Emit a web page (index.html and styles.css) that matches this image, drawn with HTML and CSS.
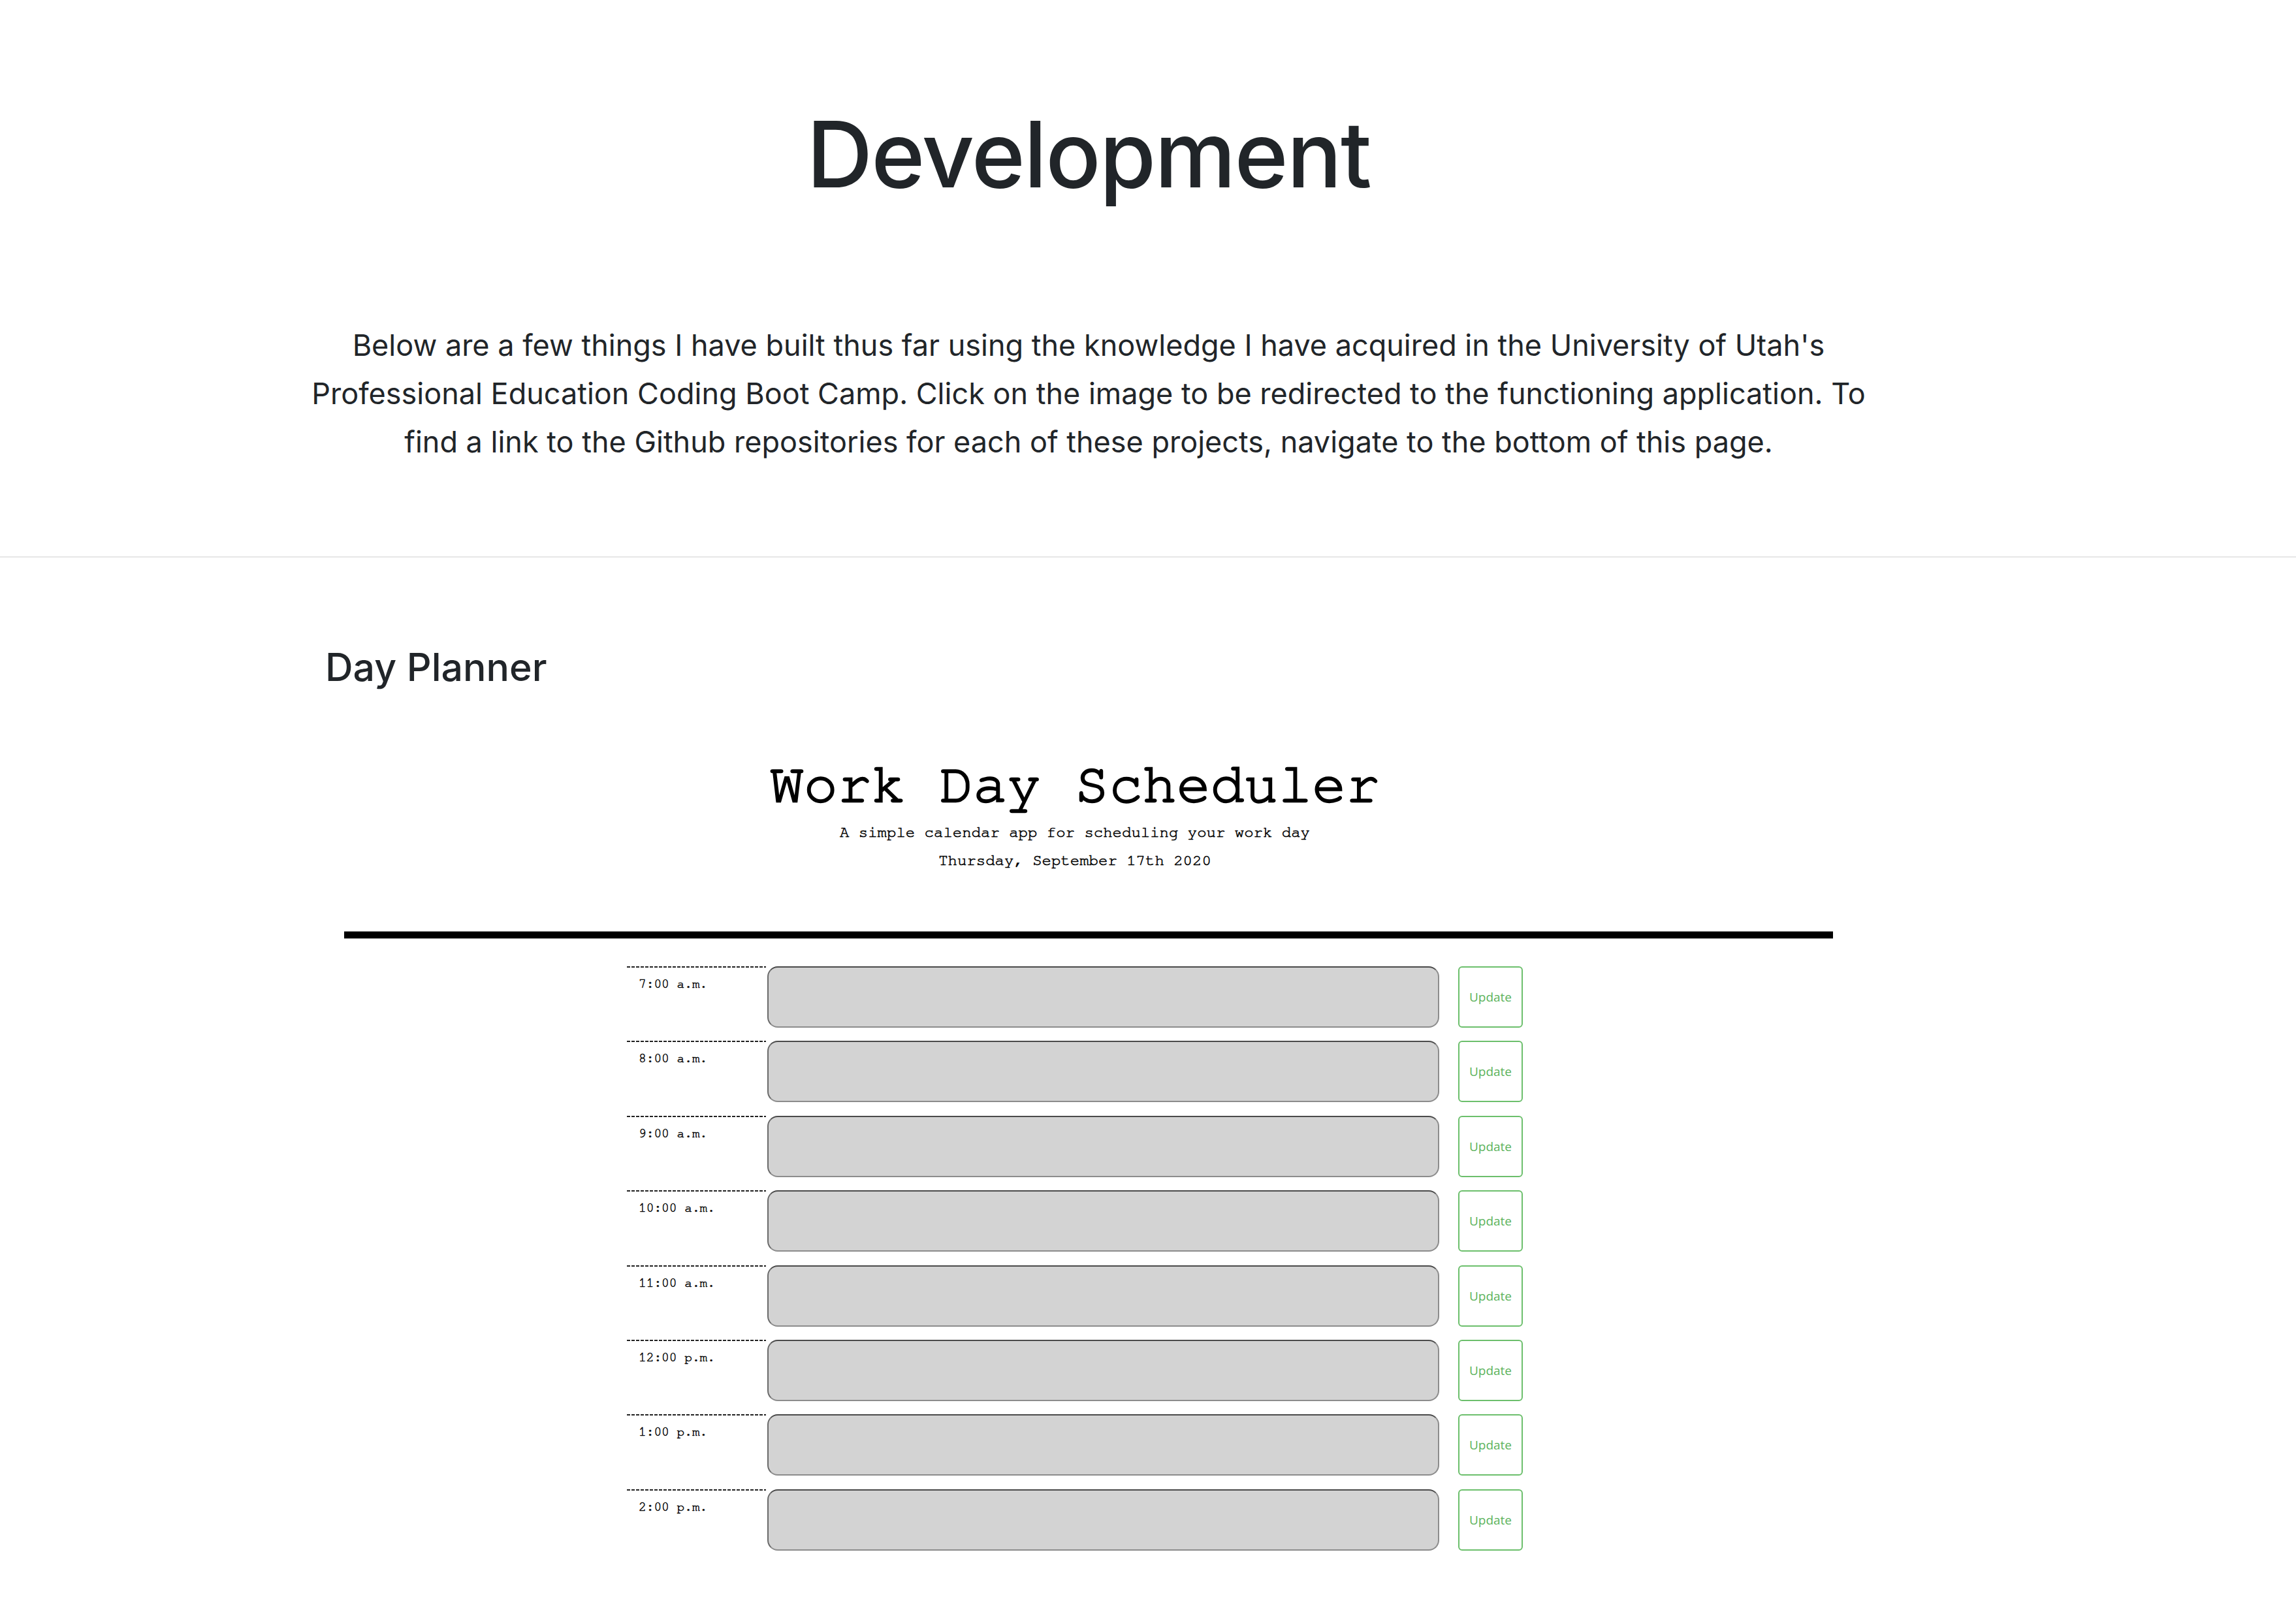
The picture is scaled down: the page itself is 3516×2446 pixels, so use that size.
FILE: index.html
```html
<!DOCTYPE html>
<html lang="en">
<head>
<meta charset="utf-8">
<title>Development</title>
<link rel="stylesheet" href="styles.css">
</head>
<body>
<header class="wrap hero">
  <h1 class="hero-title">Development</h1>
  <p class="hero-lead">Below are a few things I have built thus far using the knowledge I have acquired in the University of Utah's<br>Professional Education Coding Boot Camp. Click on the image to be redirected to the functioning application. To<br>find a link to the Github repositories for each of these projects, navigate to the bottom of this page.</p>
</header>
<hr class="divider">
<main class="projects">
  <section class="project">
    <h2 class="project-title">Day Planner</h2>
    <a class="shot" href="#">
      <div class="sched-head">
        <div class="sched-title">Work Day Scheduler</div>
        <div class="sched-line">A simple calendar app for scheduling your work day</div>
        <div class="sched-line">Thursday, September 17th 2020</div>
      </div>
      <div class="sched-bar"></div>
      <div class="sched-rows">
        <div class="sched-row"><div class="hour">7:00 a.m.</div><div class="desc"></div><div class="save">Update</div></div>
        <div class="sched-row"><div class="hour">8:00 a.m.</div><div class="desc"></div><div class="save">Update</div></div>
        <div class="sched-row"><div class="hour">9:00 a.m.</div><div class="desc"></div><div class="save">Update</div></div>
        <div class="sched-row"><div class="hour">10:00 a.m.</div><div class="desc"></div><div class="save">Update</div></div>
        <div class="sched-row"><div class="hour">11:00 a.m.</div><div class="desc"></div><div class="save">Update</div></div>
        <div class="sched-row"><div class="hour">12:00 p.m.</div><div class="desc"></div><div class="save">Update</div></div>
        <div class="sched-row"><div class="hour">1:00 p.m.</div><div class="desc"></div><div class="save">Update</div></div>
        <div class="sched-row"><div class="hour">2:00 p.m.</div><div class="desc"></div><div class="save">Update</div></div>
      </div>
    </a>
  </section>
</main>
</body>
</html>
```
FILE: styles.css
```css
html, body {
  margin: 0;
  padding: 0;
  background: #fff;
}
body {
  font-family: Inter, "Liberation Sans", sans-serif;
  color: #212529;
}
.wrap {
  width: 3334px;
}
.hero {
  padding-top: 166px;
  padding-bottom: 138px;
  text-align: center;
}
.hero-title {
  margin: 0;
  font-size: 140px;
  line-height: 140px;
  font-weight: 500;
  letter-spacing: -2px;
}
.hero-lead {
  margin: 186px 0 0;
  font-size: 45px;
  line-height: 74px;
  font-weight: 400;
}
.divider {
  margin: 0;
  border: 0;
  border-top: 2px solid #e6e6e6;
}
.projects {
  margin-left: 498px;
  width: 2338px;
  padding-top: 132px;
}
.project-title {
  margin: 0;
  font-size: 59px;
  line-height: 72px;
  font-weight: 500;
}
.shot {
  display: block;
  width: 2280px;
  margin: 100px auto 0;
  text-decoration: none;
  color: #000;
}
.sched-head {
  display: flex;
  flex-direction: column;
  align-items: center;
  padding-right: 42px;
  font-family: "Nimbus Mono PS", "FreeMono", "Courier", "Liberation Mono", monospace;
  color: #000;
}
.sched-title {
  font-size: 86.5px;
  line-height: 88px;
  -webkit-text-stroke: 2.4px #000;
}
.sched-line {
  font-size: 24px;
  line-height: 43px;
  -webkit-text-stroke: 0.6px #000;
}
.sched-title + .sched-line {
  margin-top: 8px;
}
.sched-bar {
  margin-top: 86px;
  height: 10px;
  background: #000;
  border-top: 1px solid #9a9a9a;
  border-bottom: 1px solid #9a9a9a;
}
.sched-rows {
  margin: 42px 0 0 433px;
  width: 1372px;
  display: flex;
  flex-direction: column;
  gap: 20.4px;
}
.sched-row {
  display: flex;
  height: 94px;
}
.hour {
  width: 213px;
  box-sizing: border-box;
  padding: 18px 0 0 18px;
  background: repeating-linear-gradient(to right, #222 0 5px, transparent 5px 7px) top left / 100% 2px no-repeat;
  font-family: "Nimbus Mono PS", "FreeMono", "Courier", "Liberation Mono", monospace;
  font-size: 19.5px;
  line-height: 19.5px;
  color: #000;
  -webkit-text-stroke: 0.5px #000;
}
.desc {
  margin-left: 2px;
  width: 1029px;
  box-sizing: border-box;
  background: #d3d3d3;
  border: 2px solid #8c8c8c;
  border-top-color: #4a4a4a;
  border-left-color: #6a6a6a;
  border-radius: 16px;
}
.save {
  margin-left: 29px;
  width: 99px;
  box-sizing: border-box;
  border: 2px solid #6cbf6c;
  border-radius: 6px;
  display: flex;
  align-items: center;
  justify-content: center;
  font-family: "Open Sans", sans-serif;
  font-size: 19px;
  color: #5cb35c;
}
```
